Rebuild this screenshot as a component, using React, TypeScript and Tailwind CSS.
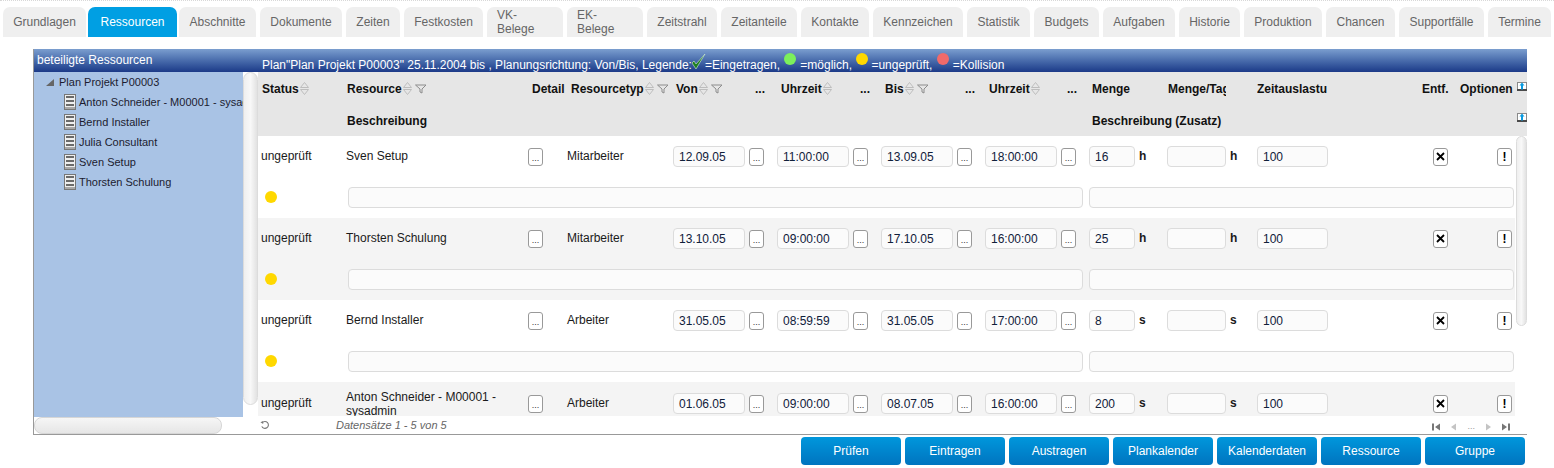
import React from "react";

const GRID =
  "grid grid-cols-[87px_180px_42px_105px_76px_28px_76px_28px_76px_28px_76px_28px_76px_92px_164px_36px_59px] items-center";

const tabs = [
  { label: "Grundlagen", w: "w-[83px]" },
  { label: "Ressourcen", w: "w-[89px] -mx-[2px]", active: true },
  { label: "Abschnitte", w: "w-[77px]" },
  { label: "Dokumente", w: "w-[82px]" },
  { label: "Zeiten", w: "w-[54px]" },
  { label: "Festkosten", w: "w-[79px]" },
  { label: "VK-Belege", w: "w-[76px]", wrap: true },
  { label: "EK-Belege", w: "w-[76px]", wrap: true },
  { label: "Zeitstrahl", w: "w-[70px]" },
  { label: "Zeitanteile", w: "w-[76px]" },
  { label: "Kontakte", w: "w-[68px]" },
  { label: "Kennzeichen", w: "w-[90px]" },
  { label: "Statistik", w: "w-[63px]" },
  { label: "Budgets", w: "w-[65px]" },
  { label: "Aufgaben", w: "w-[72px]" },
  { label: "Historie", w: "w-[61px]" },
  { label: "Produktion", w: "w-[78px]" },
  { label: "Chancen", w: "w-[69px]" },
  { label: "Supportfälle", w: "w-[85px]" },
  { label: "Termine", w: "w-[63px]" },
];

const treeItems = [
  "Anton Schneider - M00001 - sysadmin",
  "Bernd Installer",
  "Julia Consultant",
  "Sven Setup",
  "Thorsten Schulung",
];

const rows = [
  { name: "Sven Setup", typ: "Mitarbeiter", von: "12.09.05", t1: "11:00:00", bis: "13.09.05", t2: "18:00:00", menge: "16", unit: "h" },
  { name: "Thorsten Schulung", typ: "Mitarbeiter", von: "13.10.05", t1: "09:00:00", bis: "17.10.05", t2: "16:00:00", menge: "25", unit: "h" },
  { name: "Bernd Installer", typ: "Arbeiter", von: "31.05.05", t1: "08:59:59", bis: "31.05.05", t2: "17:00:00", menge: "8", unit: "s" },
  { name: "Anton Schneider - M00001 - sysadmin", typ: "Arbeiter", von: "01.06.05", t1: "09:00:00", bis: "08.07.05", t2: "16:00:00", menge: "200", unit: "s", tall: true },
];

function SortIcon() {
  return (
    <svg width="9" height="13" viewBox="0 0 9 13" className="ml-[1px] -mt-[1px] shrink-0" fill="none" stroke="#bdbdbd">
      <path d="M0.5 5.5 L4.5 0.5 L8.5 5.5 H0.5" />
      <path d="M0.5 7.5 H8.5 L4.5 12.5 L0.5 7.5" />
    </svg>
  );
}

function FilterIcon() {
  return (
    <svg width="12" height="10" viewBox="0 0 12 10" className="ml-[3px] -mt-[1px] shrink-0" fill="none" stroke="#8c8c8c">
      <path d="M0.5 1 H11 L7 5 V9 L5 8 V5 Z" />
    </svg>
  );
}

function ExportIcon() {
  return (
    <svg width="10" height="10" viewBox="0 0 10 10" className="block">
      <rect x="0.5" y="0.5" width="9" height="8" fill="#ffffff" stroke="#8a8a8a" />
      <rect x="0" y="7" width="10" height="2" fill="#4a4a4a" />
      <path d="M5 0.5 L7.5 3.5 H6 V7.5 H4 V3.5 H2.5 Z" fill="#0a9be0" />
    </svg>
  );
}

function DocIcon() {
  return (
    <svg width="12" height="16" viewBox="0 0 12 16" className="shrink-0">
      <rect x="0.5" y="0.5" width="11" height="15" fill="#eeeeee" stroke="#777" />
      <rect x="2" y="2" width="8" height="2" fill="#6a6a6a" />
      <rect x="2" y="6" width="8" height="2" fill="#6a6a6a" />
      <rect x="2" y="10" width="8" height="2" fill="#6a6a6a" />
      <rect x="1" y="13" width="10" height="2" fill="#a8a8a8" />
    </svg>
  );
}

function Dot({ color }: { color: string }) {
  return <span className={`inline-block size-[12px] rounded-full ${color}`} />;
}

function Field({ value, w }: { value?: string; w: string }) {
  return (
    <div className={`${w} h-[21px] shrink-0 rounded-[4px] border border-[#dcdcdc] bg-[#fbfbfb] pl-[5px] text-[12px] leading-[21px] text-[#10203a]`}>
      {value}
    </div>
  );
}

function DotsButton() {
  return (
    <button className="flex h-[18px] w-[15px] items-end justify-center rounded-[3px] border border-[#999] bg-white pb-[2px] text-[9px] leading-[9px] text-[#333]">
      ...
    </button>
  );
}

function HeadCell({ label, cls, sort, filter }: { label: string; cls: string; sort?: boolean; filter?: boolean }) {
  return (
    <div className={`flex items-center whitespace-nowrap ${cls}`}>
      {label}
      {sort && <SortIcon />}
      {filter && <FilterIcon />}
    </div>
  );
}

function ResourceRow({ row, alt }: { row: (typeof rows)[number]; alt: boolean }) {
  return (
    <div className={`h-[82px] shrink-0 text-[12px] text-[#1a1a1a] ${alt ? "bg-[#f4f4f4]" : "bg-white"}`}>
      <div className={`${GRID} ${row.tall ? "h-[43px]" : "h-[41px]"}`}>
        <div className="pb-[2px] pl-[3px]">ungeprüft</div>
        <div className={`pl-[1px] pr-[8px] leading-[14px] ${row.tall ? "mt-[1px]" : "pb-[2px]"}`}>{row.name}</div>
        <div className="pl-[3px]"><DotsButton /></div>
        <div className="pb-[2px]">{row.typ}</div>
        <div className="pl-[1px]"><Field value={row.von} w="w-[72px]" /></div>
        <div className="pl-[1px]"><DotsButton /></div>
        <div className="pl-[1px]"><Field value={row.t1} w="w-[72px]" /></div>
        <div className="pl-[1px]"><DotsButton /></div>
        <div className="pl-[1px]"><Field value={row.bis} w="w-[72px]" /></div>
        <div className="pl-[1px]"><DotsButton /></div>
        <div className="pl-[1px]"><Field value={row.t2} w="w-[72px]" /></div>
        <div className="pl-[1px]"><DotsButton /></div>
        <div className="flex items-center pl-[1px]">
          <Field value={row.menge} w="w-[46px]" />
          <span className="mb-[2px] ml-[4px] font-bold">{row.unit}</span>
        </div>
        <div className="flex items-center pl-[3px]">
          <Field w="w-[59px]" />
          <span className="mb-[2px] ml-[4px] font-bold">{row.unit}</span>
        </div>
        <div className="pl-[1px]"><Field value="100" w="w-[71px]" /></div>
        <div className="pl-[13px]">
          <button className="flex h-[18px] w-[15px] items-center justify-center rounded-[3px] border border-[#999] bg-white">
            <svg width="9" height="9" viewBox="0 0 9 9" stroke="#000" strokeWidth="1.8">
              <path d="M1 1 L8 8 M8 1 L1 8" />
            </svg>
          </button>
        </div>
        <div className="pl-[41px]">
          <button className="flex h-[18px] w-[15px] items-center justify-center rounded-[3px] border border-[#999] bg-white text-[12px] font-bold leading-none text-black">
            !
          </button>
        </div>
      </div>
      <div className="flex h-[41px] items-center">
        <div className="w-[90px] shrink-0 pl-[7px] pt-[2px]">
          <Dot color="bg-[#ffd800] block" />
        </div>
        <Field w="w-[735px]" />
        <div className="w-[6px] shrink-0" />
        <Field w="w-[425px]" />
      </div>
    </div>
  );
}

export default function App() {
  return (
    <div className="h-[468px] w-[1554px] overflow-hidden bg-white font-['Liberation_Sans',Arial,sans-serif] text-[12px]">
      <div className="border-t border-dotted border-[#d8d8d8]" />

      <div className="mt-[6px] flex h-[30px] gap-[4px] pl-[3px]">
        {tabs.map((t) => (
          <div
            key={t.label}
            className={`${t.w} flex shrink-0 items-center rounded-t-[7px] leading-[14px] ${
              t.active ? "relative bg-[#009fe3] text-white" : "bg-[#efefef] text-[#666]"
            } ${t.wrap ? "px-[10px] text-left" : "justify-center"}`}
          >
            {t.label}
          </div>
        ))}
      </div>

      <div className="ml-[33px] mt-[12px] w-[1494px] border-b border-l border-[#999]">
        <div className="flex h-[23px] bg-gradient-to-b from-[#7b9ecf] to-[#1c3a88] text-white">
          <div className="w-[224px] shrink-0 pl-[3px] pt-[3px] leading-[16px]">beteiligte Ressourcen</div>
          <div className="flex items-end whitespace-nowrap pl-[4px] leading-[14px]">
            <span>Plan"Plan Projekt P00003" 25.11.2004 bis , Planungsrichtung: Von/Bis, Legende:</span>
            <svg width="15" height="17" viewBox="0 0 15 17" className="mb-[2px] -ml-[1px] shrink-0">
              <path d="M1 10 L5 16 L14 1 L5 11 L3 8 Z" fill="#1f7f1f" stroke="#d7f0d7" strokeWidth="0.6" />
            </svg>
            <span className="-ml-[1px]">=Eingetragen,&nbsp;</span>
            <Dot color="bg-[#7cf05c] mb-[7px] ml-[1px]" />
            <span className="pl-[4px]">=möglich,&nbsp;</span>
            <Dot color="bg-[#ffd800] mb-[7px] ml-[1px]" />
            <span className="pl-[3px]">=ungeprüft,&nbsp;</span>
            <Dot color="bg-[#f06a6a] mb-[7px] ml-[1px]" />
            <span className="pl-[4px]">=Kollision</span>
          </div>
        </div>

        <div className="flex h-[362px]">
          <div className="flex w-[224px] shrink-0 flex-col">
            <div className="flex h-[345px]">
              <div className="w-[209px] shrink-0 overflow-hidden bg-[#a9c3e5] text-[11px] text-[#1c1c30]">
                <div className="flex h-[20px] items-center whitespace-nowrap pl-[12px]">
                  <svg width="8" height="7" viewBox="0 0 8 7" className="shrink-0">
                    <path d="M0 7 H8 V0 Z" fill="#666" />
                  </svg>
                  <span className="ml-[5px]">Plan Projekt P00003</span>
                </div>
                {treeItems.map((name) => (
                  <div key={name} className="flex h-[20px] items-center whitespace-nowrap pl-[30px]">
                    <DocIcon />
                    <span className="ml-[3px]">{name}</span>
                  </div>
                ))}
              </div>
              <div className="w-[15px] shrink-0 bg-white">
                <div className="h-[333px] rounded-[8px] border border-[#dcdcdc] bg-gradient-to-r from-[#efefef] via-[#f8f8f8] to-[#e2e2e2]" />
              </div>
            </div>
            <div className="h-[17px] w-[188px] rounded-[8px] border border-[#d6d6d6] bg-gradient-to-b from-[#f6f6f6] to-[#e6e6e6]" />
          </div>

          <div className="flex w-[1269px] shrink-0 flex-col">
            <div className="h-[64px] shrink-0 bg-[#e6e6e6] text-[12px] font-bold text-[#111]">
              <div className="flex h-[32px] items-center pt-[2px]">
                <div className={`${GRID} w-[1257px] shrink-0`}>
                  <HeadCell label="Status" cls="pl-[4px]" sort />
                  <HeadCell label="Resource" cls="pl-[2px]" sort filter />
                  <HeadCell label="Detail" cls="pl-[7px]" />
                  <HeadCell label="Resourcetyp" cls="pl-[4px]" sort filter />
                  <HeadCell label="Von" cls="pl-[4px]" sort filter />
                  <HeadCell label="..." cls="pl-[7px]" />
                  <HeadCell label="Uhrzeit" cls="pl-[5px]" sort />
                  <HeadCell label="..." cls="pl-[8px]" />
                  <HeadCell label="Bis" cls="pl-[5px]" sort filter />
                  <HeadCell label="..." cls="pl-[9px]" />
                  <HeadCell label="Uhrzeit" cls="pl-[5px]" sort />
                  <HeadCell label="..." cls="pl-[7px]" />
                  <HeadCell label="Menge" cls="pl-[4px]" />
                  <HeadCell label="Menge/Tag" cls="ml-[4px] w-[58px] overflow-hidden" />
                  <HeadCell label="Zeitauslastung" cls="ml-[1px] w-[70px] overflow-hidden" />
                  <HeadCell label="Entf." cls="pl-[2px]" />
                  <HeadCell label="Optionen" cls="pl-[4px]" />
                </div>
                <div className="pb-[4px] pl-[2px]"><ExportIcon /></div>
              </div>
              <div className="flex h-[32px] items-center pt-[2px]">
                <div className="w-[834px] shrink-0 pl-[89px]">Beschreibung</div>
                <div className="w-[423px] shrink-0">Beschreibung (Zusatz)</div>
                <div className="pb-[6px] pl-[2px]"><ExportIcon /></div>
              </div>
            </div>

            <div className="flex h-[280px] shrink-0 overflow-hidden">
              <div className="flex w-[1257px] shrink-0 flex-col">
                {rows.map((r, i) => (
                  <ResourceRow key={r.name} row={r} alt={i % 2 === 1} />
                ))}
              </div>
              <div className="ml-[1px] h-[190px] w-[11px] rounded-[6px] border border-[#dcdcdc] bg-gradient-to-r from-[#efefef] via-[#f8f8f8] to-[#e2e2e2]" />
            </div>

            <div className="flex h-[18px] items-center text-[#666]">
              <svg width="10" height="10" viewBox="0 0 11 11" className="ml-[2px] shrink-0" fill="none" stroke="#777" strokeWidth="1.2">
                <path d="M2.5 3 A3.8 3.8 0 1 1 2 7" />
                <path d="M0.5 2.5 L3.5 1 V4.5 Z" fill="#777" stroke="none" />
              </svg>
              <span className="ml-[66px] pt-[1px] text-[11px] italic">Datensätze 1 - 5 von 5</span>
              <div className="ml-auto mr-[17px] flex items-center gap-[11px] pt-[3px] text-[9px] text-[#999]">
                <svg width="8" height="8" viewBox="0 0 8 7" fill="#777"><path d="M0 0 H2 V7 H0 Z M8 0 V7 L3 3.5 Z" /></svg>
                <svg width="5" height="8" viewBox="0 0 5 7" fill="#c4c4c4"><path d="M5 0 V7 L0 3.5 Z" /></svg>
                <span>...</span>
                <svg width="5" height="8" viewBox="0 0 5 7" fill="#c4c4c4"><path d="M0 0 V7 L5 3.5 Z" /></svg>
                <svg width="8" height="8" viewBox="0 0 8 7" fill="#777"><path d="M0 0 V7 L5 3.5 Z M6 0 H8 V7 H6 Z" /></svg>
              </div>
            </div>
          </div>
        </div>
      </div>

      <div className="mt-[2px] flex gap-[4px] pl-[801px]">
        {["Prüfen", "Eintragen", "Austragen", "Plankalender", "Kalenderdaten", "Ressource", "Gruppe"].map((b) => (
          <button
            key={b}
            className="h-[28px] w-[100px] rounded-[4px] bg-gradient-to-b from-[#0097dc] to-[#0074bf] text-[12px] text-white"
          >
            {b}
          </button>
        ))}
      </div>
    </div>
  );
}
